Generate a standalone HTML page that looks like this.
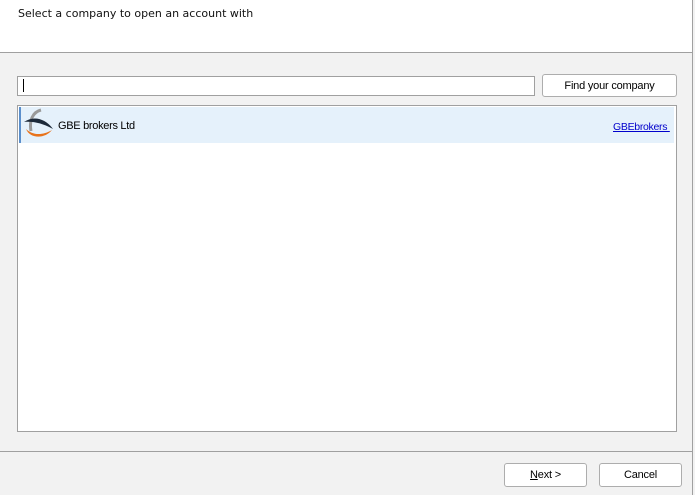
<!DOCTYPE html>
<html><head><style>
body{margin:0;width:695px;height:495px;background:#f2f2f2;position:relative;overflow:hidden;font-family:"DejaVu Sans","Liberation Sans",sans-serif;}
.abs{position:absolute;box-sizing:border-box}
.btn{border:1px solid #adadad;border-radius:3px;background:#fff;font-family:"Liberation Sans",sans-serif;font-size:11px;letter-spacing:-0.2px;color:#000;text-align:center}
</style></head><body>
<div class="abs" style="left:0;top:0;width:693px;height:53px;background:#fff;border-bottom:1px solid #a0a0a0"></div>
<div class="abs" style="left:18px;top:7px;font-size:11px;color:#111">Select a company to open an account with</div>
<div class="abs" style="left:692px;top:0;width:1px;height:495px;background:#a0a0a0"></div>
<div class="abs" style="left:17px;top:76px;width:518px;height:20px;background:#fff;border:1px solid #a0a0a0"></div>
<div class="abs" style="left:23px;top:79px;width:1px;height:13px;background:#000"></div>
<div class="abs btn" style="left:542px;top:74px;width:135px;height:23px;line-height:22px">Find your company</div>
<div class="abs" style="left:17px;top:105px;width:660px;height:327px;background:#fff;border:1px solid #a0a0a0"></div>
<div class="abs" style="left:19px;top:107px;width:655px;height:36px;background:#e5f1fb;border-left:2px solid #5b8fcc"></div>
<svg class="abs" style="left:22px;top:108px" width="32" height="32" viewBox="0 0 32 32">
<path d="M19 2 C11 4 7 12 9 23" stroke="#9a9a9a" stroke-width="3" fill="none"/>
<path d="M2 14 C12 7 24 11 31 21 C22 16 12 13 2 14Z" fill="#1d2a3a"/>
<path d="M4 21 C8 31 23 31 30 22 C20 28 10 27 4 21Z" fill="#e8731c"/>
</svg>
<div class="abs" style="left:58px;top:120px;font-family:'Liberation Sans',sans-serif;font-size:11px;letter-spacing:-0.3px;color:#000">GBE brokers Ltd</div>
<div class="abs" style="left:613px;top:121px;font-family:'Liberation Sans',sans-serif;font-size:10.5px;letter-spacing:-0.3px;color:#0000cc;text-decoration:underline">GBEbrokers&nbsp;</div>
<div class="abs" style="left:0;top:451px;width:692px;height:1px;background:#a0a0a0"></div>
<div class="abs btn" style="left:504px;top:463px;width:83px;height:24px;line-height:23px"><u>N</u>ext &gt;</div>
<div class="abs btn" style="left:599px;top:463px;width:83px;height:24px;line-height:23px">Cancel</div>
</body></html>
